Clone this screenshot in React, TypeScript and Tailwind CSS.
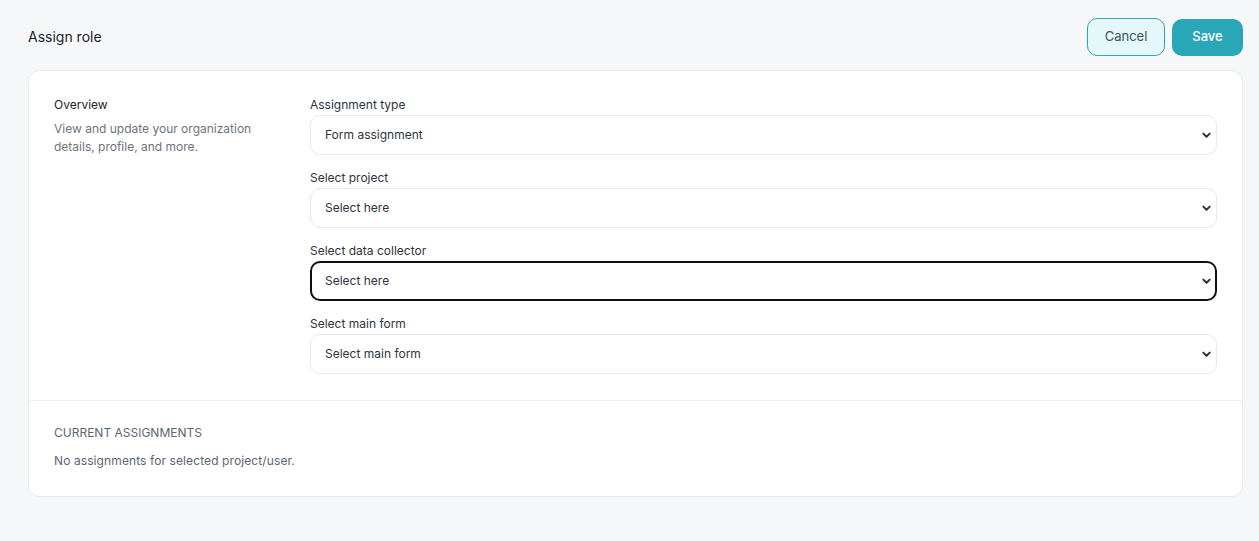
import React, { useState } from 'react';

interface FieldProps {
  label: string;
  value: string;
  focused?: boolean;
}

function SelectField({ label, value, focused }: FieldProps) {
  return (
    <div className="flex flex-col">
      <label className="text-[12px] leading-[16px] text-[#2d3440] mb-[2px]">{label}</label>
      <div className="relative">
        <div
          className={`h-[40px] flex items-center pr-10 rounded-[10px] bg-white text-[12px] text-[#2d3440] ${
            focused ? 'border-2 border-[#111] pl-[13px]' : 'border border-[#e6e8ec] pl-[14px]'
          }`}
        >
          {value}
        </div>
        <svg
          className="absolute right-[5px] top-1/2 -translate-y-1/2 w-[11px] h-[11px] text-[#333]"
          viewBox="0 0 12 12"
          fill="none"
        >
          <path d="M2.5 4.5 L6 8 L9.5 4.5" stroke="currentColor" strokeWidth="2.2" strokeLinecap="round" strokeLinejoin="round" />
        </svg>
      </div>
    </div>
  );
}

export default function App() {
  const [fields] = useState([
    { label: 'Assignment type', value: 'Form assignment' },
    { label: 'Select project', value: 'Select here' },
    { label: 'Select data collector', value: 'Select here', focused: true },
    { label: 'Select main form', value: 'Select main form' },
  ]);

  return (
    <div className="min-h-[541px] w-full bg-[#f6f7f9] pl-[28px] pr-[16px] pt-[18px] pb-[44px] font-['Inter',sans-serif]">
      {/* Header */}
      <div className="flex items-center justify-between h-[38px]">
        <h1 className="text-[14px] text-[#1d222b] -mt-[1px]">Assign role</h1>
        <div className="flex items-center gap-[7px]">
          <button className="h-[38px] w-[78px] rounded-[10px] border border-[#2ba7b5] bg-[#e4f8fa] text-[13px] text-[#3a5560]">
            Cancel
          </button>
          <button className="h-[37px] w-[71px] rounded-[10px] bg-[#2aa7b6] text-[13px] font-medium text-white">
            Save
          </button>
        </div>
      </div>

      {/* Card */}
      <div className="mt-[14px] bg-white border border-[#e8eaee] rounded-[12px]">
        <div className="flex px-[25px] pt-[26px] pb-[26px]">
          <div className="w-[256px] shrink-0">
            <h2 className="text-[12px] leading-[16px] text-[#1d222b]">Overview</h2>
            <p className="mt-[7px] text-[12px] leading-[18px] text-[#6b7480] w-[215px]">
              View and update your organization details, profile, and more.
            </p>
          </div>
          <div className="flex-1 flex flex-col gap-[15px]">
            {fields.map((f) => (
              <SelectField key={f.label} label={f.label} value={f.value} focused={f.focused} />
            ))}
          </div>
        </div>

        <div className="border-t border-[#f0f1f4] px-[25px] pt-[24px] pb-[27px]">
          <h3 className="text-[12px] leading-[16px] uppercase text-[#5d6673]">Current assignments</h3>
          <p className="mt-[12px] text-[12px] leading-[16px] tracking-[0.1px] text-[#5d6673]">No assignments for selected project/user.</p>
        </div>
      </div>
    </div>
  );
}
